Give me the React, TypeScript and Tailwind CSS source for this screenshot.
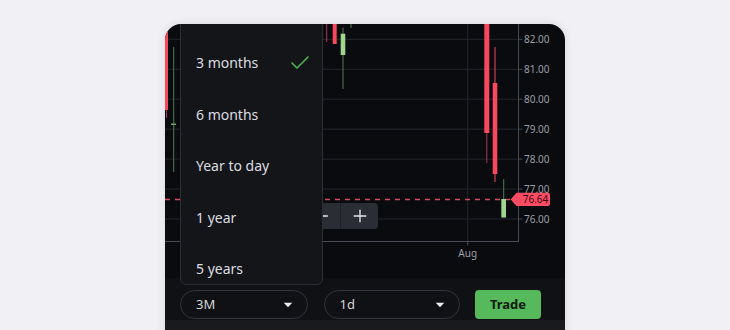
import React from "react";
import { Check, Minus, Plus } from "lucide-react";

const P = (p: number) => 15.3 + (82 - p) * 29.95;
const prices = [82, 81, 80, 79, 78, 77, 76];

function Chart() {
  const red = "#f7485d";
  const redWick = "#a8394a";
  const green = "#9fd58c";
  const greenWick = "#4e7d56";
  return (
    <svg width="400" height="254" viewBox="0 0 400 254" className="block">
      {prices.map((p) => (
        <line key={p} x1={0} x2={353} y1={P(p)} y2={P(p)} stroke="#24272d" strokeWidth={1} />
      ))}
      <line x1={302.7} x2={302.7} y1={0} y2={217} stroke="#24272d" strokeWidth={1} />
      {/* dashed price line */}
      <line x1={0} x2={346} y1={175.5} y2={175.5} stroke="#d24a5f" strokeWidth={1.4} strokeDasharray="5 5" />
      {/* candles */}
      <rect x={0} y={-2} width={3} height={88} fill={red} />
      <rect x={1} y={86} width={1} height={8} fill={redWick} />
      <rect x={8.2} y={23} width={1} height={125} fill={greenWick} />
      <rect x={6} y={99.5} width={5} height={1.5} fill="#6aa36e" />
      <rect x={161.2} y={-2} width={1} height={20} fill={redWick} />
      <rect x={167.7} y={-2} width={4} height={22} fill={red} />
      <rect x={177.5} y={3.7} width={1} height={61.3} fill={greenWick} />
      <rect x={175.7} y={9.7} width={4.6} height={21.3} fill={green} />
      <rect x={185.5} y={-2} width={1} height={6} fill={greenWick} />
      <rect x={321.3} y={105} width={1} height={34} fill={redWick} />
      <rect x={319.3} y={-2} width={5} height={111} fill={red} />
      <rect x={329.5} y={23} width={1} height={135} fill={red} />
      <rect x={327.7} y={59} width={4.6} height={91} fill={red} />
      <rect x={338.2} y={155} width={1} height={20} fill={greenWick} />
      <rect x={336.3} y={175} width={4.7} height={18.5} fill={green} />
      {/* axes */}
      <line x1={353.5} x2={353.5} y1={0} y2={218} stroke="#474b53" strokeWidth={1} />
      <line x1={0} x2={354} y1={217.5} y2={217.5} stroke="#474b53" strokeWidth={1} />
      <line x1={302.7} x2={302.7} y1={217.5} y2={221.5} stroke="#474b53" strokeWidth={1} />
      {prices.map((p) => (
        <g key={p}>
          <line x1={353.5} x2={357.5} y1={P(p)} y2={P(p)} stroke="#474b53" strokeWidth={1} />
          <text x={359} y={P(p) + 3.6} fontSize={10} fill="#9a9ea6" fontFamily="'Noto Sans', sans-serif">
            {p.toFixed(2)}
          </text>
        </g>
      ))}
      <text x={302.7} y={232.5} fontSize={10} fill="#9a9ea6" textAnchor="middle" fontFamily="'Noto Sans', sans-serif">
        Aug
      </text>
      {/* price label */}
      <path d="M345.7 175.5 L351.5 168.7 H383 A2 2 0 0 1 385 170.7 V180 A2 2 0 0 1 383 182 H351.5 Z" fill="#fd4c63" />
      <text x={370.5} y={179.2} fontSize={10} fill="#3b0a12" textAnchor="middle" fontFamily="'Noto Sans', sans-serif">
        76.64
      </text>
    </svg>
  );
}

function Caret() {
  return (
    <svg width="10" height="6" viewBox="0 0 10 6" className="block">
      <path d="M0.8 0.8 H9.2 L5 5.2 Z" fill="#eceef0" />
    </svg>
  );
}

export default function App() {
  const items = ["3 months", "6 months", "Year to day", "1 year", "5 years"];
  return (
    <div className="w-[730px] h-[330px] overflow-hidden bg-[#f1f1f5] pt-[24px] pl-[165px] font-['Noto_Sans',sans-serif]">
      <div className="relative w-[400px] h-[320px] rounded-t-[16px] overflow-hidden bg-[#0a0b0e] flex flex-col shadow-[0_0_10px_rgba(0,0,0,0.10)]">
        <div className="relative h-[254px] shrink-0">
          <Chart />
          <div className="absolute left-[137px] top-[179px] h-[26px] flex rounded-[4px] overflow-hidden bg-[#2a2e34]">
            <div className="w-[38px] flex items-center justify-center text-[#e6e7e9]">
              <Minus size={22} strokeWidth={1.6} />
            </div>
            <div className="w-[1px] bg-[#1d2025]" />
            <div className="w-[37px] flex items-center justify-center text-[#e6e7e9]">
              <Plus size={20} strokeWidth={1.6} />
            </div>
          </div>
        </div>
        <div className="h-[42px] shrink-0 bg-[#101114] flex items-start pt-[12px] pl-[15px] gap-[15.5px]">
          <div className="w-[128px] h-[29px] rounded-full border border-[#33363d] flex items-center justify-between pl-[15px] pr-[14px]">
            <span className="text-[13px] text-[#d6d8db]">3M</span>
            <Caret />
          </div>
          <div className="w-[136px] h-[29px] rounded-full border border-[#33363d] flex items-center justify-between pl-[15px] pr-[14px]">
            <span className="text-[13px] text-[#d6d8db]">1d</span>
            <Caret />
          </div>
          <div className="w-[66px] h-[29px] rounded-[4px] bg-[#56b95b] flex items-center justify-center">
            <span className="text-[13px] font-bold text-[#0c1a0d]">Trade</span>
          </div>
        </div>
        <div className="flex-1 bg-[#191a1e]" />
        <div className="absolute left-[15px] top-[-10px] w-[143px] z-10 rounded-[6px] border border-[#2b2e35] bg-[#141519] pt-[32px] flex flex-col gap-[20.5px]">
          {items.map((t, i) => (
            <div key={t} className="h-[31px] flex items-center justify-between pl-[15px] pr-[10px]">
              <span className="text-[14px] text-[#dcdde0]">{t}</span>
              {i === 0 && <Check size={24} strokeWidth={1.7} className="text-[#4caf50]" />}
            </div>
          ))}
        </div>
      </div>
    </div>
  );
}
